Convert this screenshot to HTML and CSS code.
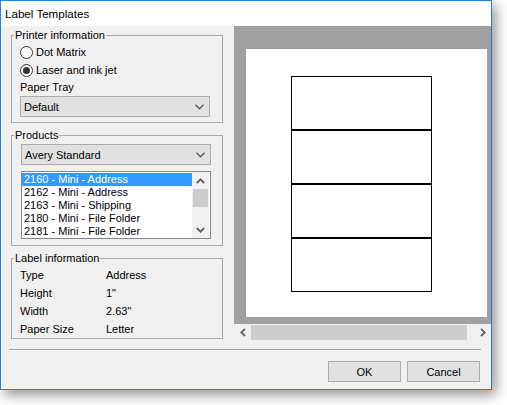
FILE: index.html
```html
<!DOCTYPE html>
<html>
<head>
<meta charset="utf-8">
<link rel="stylesheet" href="styles.css">
</head>
<body>
<div class="window">
  <div class="titlebar">Label Templates</div>
  <div class="main">
    <div class="leftcol">
      <fieldset class="group g-printer">
        <legend>Printer information</legend>
        <label class="radio first"><span class="dot"></span>Dot Matrix</label>
        <label class="radio"><span class="dot checked"></span>Laser and ink jet</label>
        <div class="field-label">Paper Tray</div>
        <div class="combo"><span>Default</span><svg class="chev" width="9" height="6" viewBox="0 0 9 6"><polyline points="0.5,0.8 4.5,4.8 8.5,0.8" fill="none" stroke="#5a5a5a" stroke-width="1.3"/></svg></div>
      </fieldset>
      <fieldset class="group g-products">
        <legend>Products</legend>
        <div class="combo"><span>Avery Standard</span><svg class="chev" width="9" height="6" viewBox="0 0 9 6"><polyline points="0.5,0.8 4.5,4.8 8.5,0.8" fill="none" stroke="#5a5a5a" stroke-width="1.3"/></svg></div>
        <div class="listbox">
          <div class="items">
            <div class="item selected">2160 - Mini - Address</div>
            <div class="item">2162 - Mini - Address</div>
            <div class="item">2163 - Mini - Shipping</div>
            <div class="item">2180 - Mini - File Folder</div>
            <div class="item">2181 - Mini - File Folder</div>
          </div>
          <div class="vscroll">
            <div class="sbtn"><svg width="9" height="6" viewBox="0 0 9 6"><polyline points="0.8,5 4.5,1.3 8.2,5" fill="none" stroke="#606060" stroke-width="1.8"/></svg></div>
            <div class="vthumb"></div>
            <div class="vtrack"></div>
            <div class="sbtn"><svg width="9" height="6" viewBox="0 0 9 6"><polyline points="0.8,1 4.5,4.7 8.2,1" fill="none" stroke="#606060" stroke-width="1.8"/></svg></div>
          </div>
        </div>
      </fieldset>
      <fieldset class="group g-info">
        <legend>Label information</legend>
        <div class="info-row first"><span class="k">Type</span><span class="v">Address</span></div>
        <div class="info-row"><span class="k">Height</span><span class="v">1"</span></div>
        <div class="info-row"><span class="k">Width</span><span class="v">2.63"</span></div>
        <div class="info-row"><span class="k">Paper Size</span><span class="v">Letter</span></div>
      </fieldset>
    </div>
    <div class="preview">
      <div class="canvas">
        <div class="page">
          <div class="sheet">
            <div class="label"></div>
            <div class="label"></div>
            <div class="label"></div>
            <div class="label"></div>
          </div>
        </div>
      </div>
      <div class="hscroll">
        <div class="hbtn"><svg width="6" height="9" viewBox="0 0 6 9"><polyline points="5,0.8 1.3,4.5 5,8.2" fill="none" stroke="#606060" stroke-width="1.8"/></svg></div>
        <div class="hthumb"></div>
        <div class="htrack"></div>
        <div class="hbtn"><svg width="6" height="9" viewBox="0 0 6 9"><polyline points="1,0.8 4.7,4.5 1,8.2" fill="none" stroke="#606060" stroke-width="1.8"/></svg></div>
      </div>
    </div>
  </div>
  <div class="footer">
    <div class="sep"></div>
    <div class="buttons">
      <button class="btn">OK</button>
      <button class="btn">Cancel</button>
    </div>
  </div>
</div>
</body>
</html>
```
FILE: styles.css
```css
html, body {
  margin: 0;
  padding: 0;
  background: #ffffff;
}
body {
  width: 507px;
  height: 405px;
  overflow: hidden;
  font-family: "Liberation Sans", Arial, sans-serif;
  font-size: 11px;
  color: #000;
}
.window {
  box-sizing: border-box;
  width: 492px;
  height: 390px;
  border: 1px solid #1c86dc;
  background: #f0f0f0;
  box-shadow: 4px 5px 12px rgba(0, 0, 0, 0.42);
  display: flex;
  flex-direction: column;
}
.titlebar {
  height: 25px;
  background: #ffffff;
  font-size: 11.6px;
  line-height: 25px;
  padding-left: 4px;
}
.main {
  display: flex;
  height: 315px;
}
.leftcol {
  width: 233px;
  padding-top: 2px;
  box-sizing: border-box;
}
.group {
  box-sizing: border-box;
  width: 212px;
  margin: 0 0 0 10px;
  padding: 0;
  border: 1px solid #a9a9a9;
  min-width: 0;
}
.group legend {
  padding: 0 1px;
  margin-left: 2px;
  line-height: 14px;
  font-size: 11px;
}
.g-products, .g-info {
  margin-top: 5px;
}
.g-printer {
  padding-bottom: 5px;
}
.radio {
  display: flex;
  align-items: center;
  height: 18px;
  padding-left: 8px;
  gap: 3px;
}
.radio.first {
  margin-top: 1px;
}
.dot {
  box-sizing: border-box;
  width: 13px;
  height: 13px;
  border: 1px solid #333;
  border-radius: 50%;
  background: #fff;
  display: flex;
  align-items: center;
  justify-content: center;
}
.dot.checked::after {
  content: "";
  width: 7px;
  height: 7px;
  border-radius: 50%;
  background: #333;
}
.field-label {
  height: 17px;
  line-height: 17px;
  padding-left: 8px;
}
.combo {
  box-sizing: border-box;
  width: 190px;
  height: 21px;
  margin-left: 8px;
  border: 1px solid #adadad;
  background: #e1e1e1;
  display: flex;
  align-items: center;
  justify-content: space-between;
  padding: 0 5px 0 3px;
}
.chev {
  display: block;
}
.g-products {
  padding-bottom: 6px;
}
.g-products .combo {
  margin-top: 2px;
  margin-left: 9px;
}
.listbox {
  box-sizing: border-box;
  width: 190px;
  height: 68px;
  margin: 6px 0 0 9px;
  border: 1px solid #828790;
  background: #fff;
  display: flex;
  overflow: hidden;
}
.items {
  width: 170px;
  padding-top: 1px;
  overflow: hidden;
}
.item {
  height: 13px;
  line-height: 13px;
  padding-left: 2px;
  white-space: nowrap;
}
.item.selected {
  background: #3399ff;
  color: #fff;
}
.vscroll {
  width: 17px;
  background: #f0f0f0;
  display: flex;
  flex-direction: column;
}
.sbtn {
  height: 17px;
  display: flex;
  align-items: center;
  justify-content: center;
}
.sbtn svg, .hbtn svg {
  display: block;
}
.vthumb {
  height: 18px;
  background: #cdcdcd;
  margin: 0 1px;
}
.vtrack {
  flex: 1;
}
.info-row {
  display: flex;
  height: 18px;
  line-height: 18px;
  padding-left: 8px;
}
.info-row.first {
  margin-top: 1px;
}
.info-row .k {
  width: 86px;
}
.preview {
  width: 257px;
  display: flex;
  flex-direction: column;
}
.canvas {
  box-sizing: border-box;
  height: 298px;
  background: #a0a0a0;
  padding: 23px 4px 7px 12px;
}
.page {
  width: 241px;
  height: 268px;
  background: #fff;
  padding-top: 27px;
  padding-left: 45px;
  box-sizing: border-box;
}
.sheet {
  width: 141px;
}
.label {
  box-sizing: border-box;
  height: 54px;
  border: 1px solid #000;
}
.hscroll {
  height: 17px;
  display: flex;
  background: #f0f0f0;
}
.hbtn {
  width: 17px;
  display: flex;
  align-items: center;
  justify-content: center;
}
.hthumb {
  width: 216px;
  margin: 1px 0;
  background: #cdcdcd;
}
.htrack {
  flex: 1;
}
.footer {
  display: flex;
  flex-direction: column;
}
.sep {
  margin: 8px 10px 0 8px;
  height: 1px;
  border-top: 1px solid #a0a0a0;
  background: #ffffff;
}
.buttons {
  display: flex;
  justify-content: flex-end;
  gap: 6px;
  margin-top: 10px;
  padding-right: 11px;
}
.btn {
  box-sizing: border-box;
  width: 73px;
  height: 21px;
  border: 1px solid #adadad;
  background: #e1e1e1;
  font-family: "Liberation Sans", Arial, sans-serif;
  font-size: 11px;
  color: #000;
  padding: 0;
  margin: 0;
}
```
